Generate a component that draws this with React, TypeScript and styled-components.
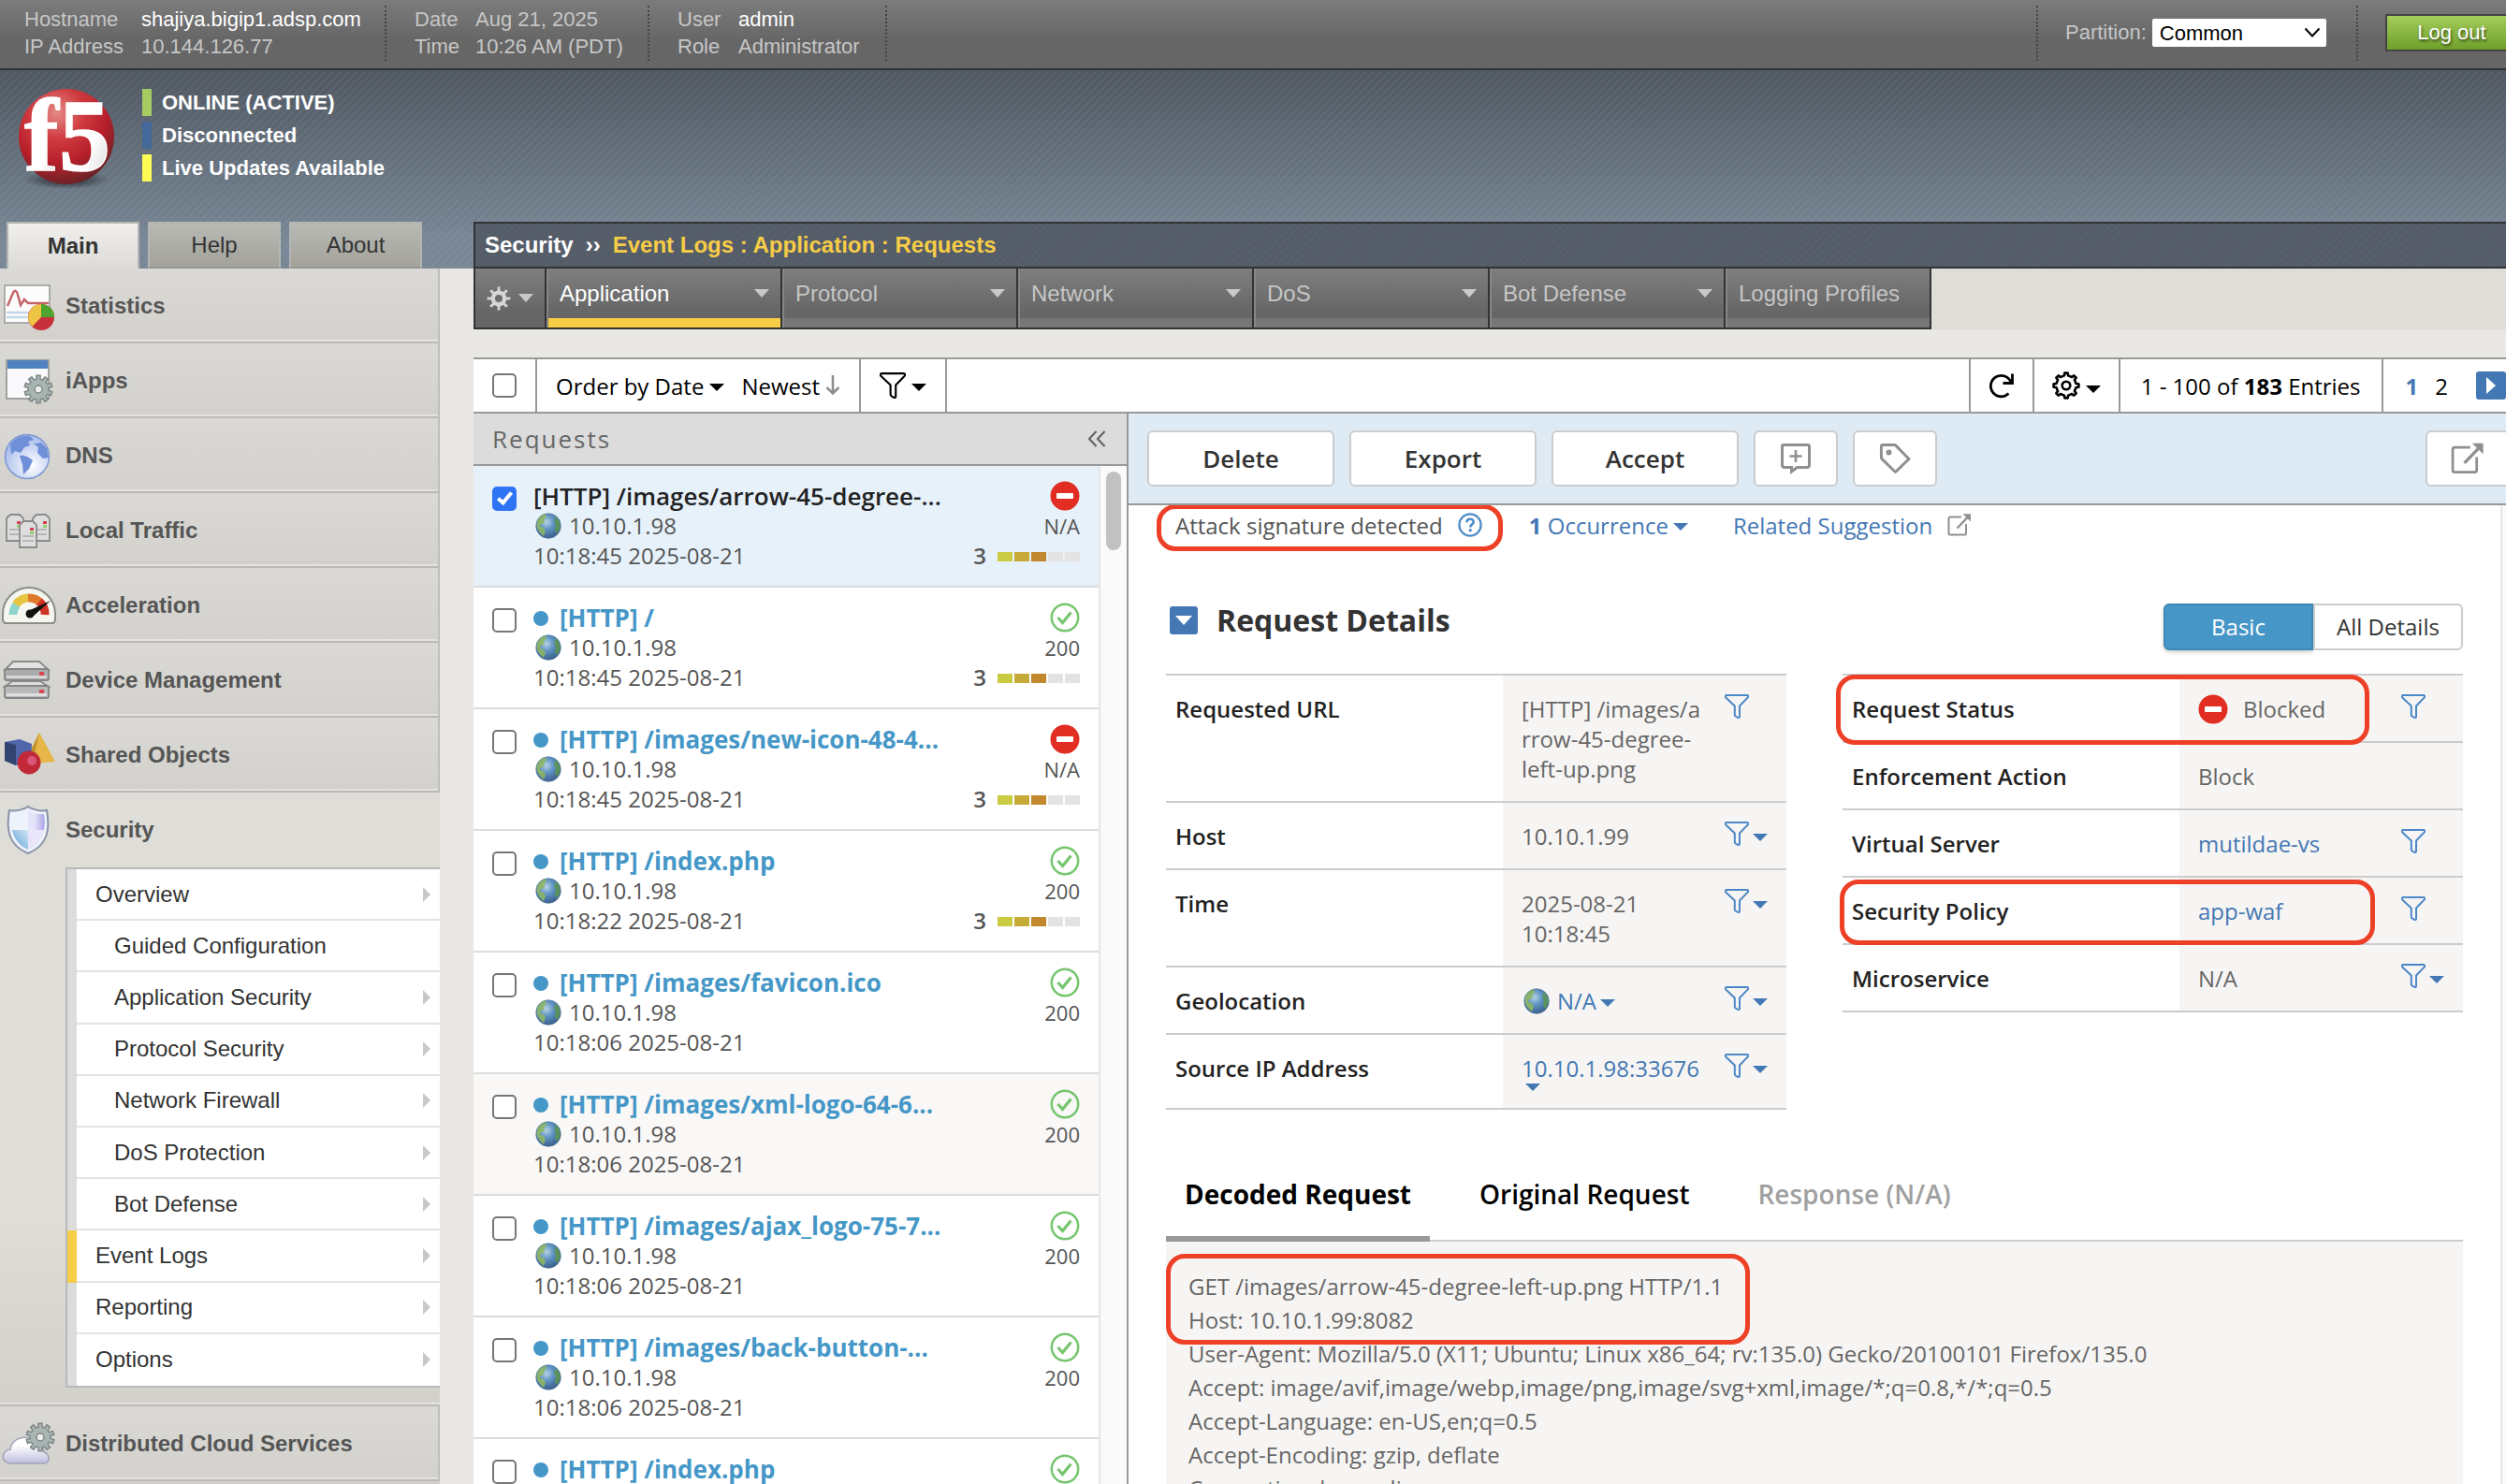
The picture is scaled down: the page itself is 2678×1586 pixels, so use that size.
import React from "react";
import styled, { createGlobalStyle, css } from "styled-components";

const SANS = '"Liberation Sans", Arial, sans-serif';
const OPEN = '"Open Sans", "Noto Sans", sans-serif';
const RED = "#ee4026";
const LINK = "#4478b4";

const Global = createGlobalStyle`
  *, *::before, *::after { box-sizing: border-box; }
  html, body { margin: 0; padding: 0; }
  body { background: #e9e8e4; font-family: ${SANS}; font-size: 24px; color: #333; overflow: hidden; }
  button, select, input { font-family: inherit; font-size: inherit; margin: 0; }
  button { cursor: pointer; }
  a { text-decoration: none; color: inherit; }
  svg { display: block; flex: none; }
  ul { list-style: none; margin: 0; padding: 0; }
  h1, h2, pre { margin: 0; font-weight: inherit; font-size: inherit; }
`;

/* ---------- icons ---------- */

function gearPath(cx: number, cy: number, outer: number, inner: number, teeth: number, top = 0.22, base = 0.3) {
  const step = (Math.PI * 2) / teeth;
  const pts: string[] = [];
  for (let i = 0; i < teeth; i++) {
    const a = i * step - Math.PI / 2;
    const corners: [number, number][] = [
      [inner, a - step * base],
      [outer, a - step * top],
      [outer, a + step * top],
      [inner, a + step * base],
    ];
    corners.forEach(([r, t]) => pts.push(`${(cx + r * Math.cos(t)).toFixed(2)} ${(cy + r * Math.sin(t)).toFixed(2)}`));
  }
  return `M${pts.join("L")}Z`;
}

const Funnel = ({ color = "#4d87c7", size = 26 }: { color?: string; size?: number }) => (
  <svg width={size} height={size} viewBox="0 0 26 26" fill="none" stroke={color} strokeWidth="2" strokeLinejoin="round">
    <path d="M2 1h22c1.2 0 1.4 1.6.8 2.4L16 12.500v11.200c0 1.300-.8 1.700-1.800 1.200l-2.400-1.400c-.8-.4-1-.8-1-1.600V12.500L1.200 3.400C.6 2.600.8 1 2 1z" />
  </svg>
);

const CaretShape = styled.svg.attrs({ viewBox: "0 0 16 8", width: 16, height: 8 })<{ $drop: number }>`
  margin-top: ${(p) => p.$drop}px;
`;
const Caret = ({ color = LINK, drop = 4 }: { color?: string; drop?: number }) => (
  <CaretShape $drop={drop}><path d="M0 0h16L8 8z" fill={color} /></CaretShape>
);

const MenuCaret = () => (
  <svg width="16" height="10" viewBox="0 0 16 10"><path d="M0 0h16L8 9z" fill="#c9c9c9" /></svg>
);

const Blocked = () => (
  <svg width="32" height="32" viewBox="0 0 32 32">
    <circle cx="16" cy="16" r="15.500" fill="#e12d22" />
    <rect x="7" y="13" width="18" height="6" rx="1" fill="#fff" />
  </svg>
);

const Passed = () => (
  <svg width="32" height="32" viewBox="0 0 32 32" fill="none" stroke="#76c56e">
    <circle cx="16" cy="16" r="14.200" strokeWidth="2.500" />
    <path d="M8.500 16l5 5.500 9-11" strokeWidth="3.200" />
  </svg>
);

const Globe = () => (
  <svg width="28" height="28" viewBox="0 0 28 28">
    <defs>
      <radialGradient id="sea" cx="0.42" cy="0.35" r="0.65">
        <stop offset="0" stopColor="#b9d3e6" />
        <stop offset="0.45" stopColor="#5f93c4" />
        <stop offset="1" stopColor="#3a5f8c" />
      </radialGradient>
    </defs>
    <circle cx="14" cy="14" r="13.500" fill="url(#sea)" />
    <path d="M2 9C3 5 7 2 11 1l1 3-3 4 1 3-4 1-1 3 4 1 2 4-2 5C4 21 0 15 2 9z" fill="#8fb85e" opacity="0.85" />
    <path d="M22 4c3 3 5 6 5 10-1 4-2 6-4 8l-2-4 1-5-2-3z" fill="#5d9650" opacity="0.85" />
    <circle cx="14" cy="14" r="13" fill="none" stroke="#5a7da0" strokeOpacity="0.5" />
  </svg>
);

const External = ({ size }: { size: number }) => (
  <svg width={size} height={size} viewBox="0 0 26 26" fill="none" stroke="#8f8f8f" strokeWidth="2">
    <path d="M15 4.500H3a1.500 1.500 0 0 0-1.500 1.500V22A1.500 1.500 0 0 0 3 23.500H18.500a1.500 1.500 0 0 0 1.500-1.500V12" />
    <path d="M10.500 16.500L23 3.500" strokeWidth="2.400" />
    <path d="M16.500 1.200H25V9.500z" fill="#8f8f8f" stroke="none" />
  </svg>
);

const CommentIcon = () => (
  <svg width="34" height="34" viewBox="0 0 34 34" fill="none" stroke="#8f8f8f" strokeWidth="3">
    <path d="M4 2.500h26a1.500 1.500 0 0 1 1.500 1.500v20a2.500 2.500 0 0 1-2.500 2.500H18.500L12.500 31v-4.500H5A2.500 2.500 0 0 1 2.500 24V4A1.500 1.500 0 0 1 4 2.500z" />
    <path d="M17 8v13M10.500 14.500h13" strokeWidth="2.600" />
  </svg>
);

const TagIcon = () => (
  <svg width="34" height="34" viewBox="0 0 34 34" fill="none" stroke="#8f8f8f" strokeWidth="3" strokeLinejoin="round">
    <path d="M4 2.500h12.500a2 2 0 0 1 1.400.6L32 17.500 17.500 31.500 3 17.400a2 2 0 0 1-.6-1.400V4A1.500 1.500 0 0 1 4 2.500z" />
    <circle cx="10.500" cy="10.500" r="3" fill="#8f8f8f" stroke="none" />
  </svg>
);

const Help = () => (
  <svg width="26" height="26" viewBox="0 0 26 26" fill="none" stroke="#4d8bc9" strokeWidth="2.200">
    <circle cx="13" cy="13" r="11.600" />
    <path d="M9.500 10.200c0-4.600 7.200-4.400 7.200-.4 0 2.600-3.500 2.600-3.500 5.600" strokeWidth="2.600" />
    <circle cx="13.200" cy="18.700" r="1.700" fill="#4d8bc9" stroke="none" />
  </svg>
);

const Refresh = () => (
  <svg width="28" height="28" viewBox="0 0 28 28" fill="none" stroke="#000" strokeWidth="2.800">
    <path d="M21.500 22.500A11.200 11.200 0 1 1 24 10.500" />
    <path d="M25.500 1.500V11.500H15.500" />
  </svg>
);

const Gear = () => (
  <svg width="30" height="30" viewBox="0 0 30 30" fill="none" stroke="#000" strokeWidth="2.600" strokeLinejoin="round">
    <path d={gearPath(15, 15, 13.500, 10.800, 8, 0.16, 0.24)} />
    <circle cx="15" cy="15" r="4.300" />
  </svg>
);

const MenuGear = () => (
  <svg width="26" height="26" viewBox="0 0 26 26">
    <path d={gearPath(13, 13, 12.500, 8.500, 8, 0.15, 0.2)} fill="#d6d6d6" />
    <circle cx="13" cy="13" r="4" fill="#6c6c6c" />
  </svg>
);

const SortDown = () => (
  <svg width="16" height="22" viewBox="0 0 16 22" fill="none" stroke="#8f8f8f" strokeWidth="2.600">
    <path d="M8 0v20M1.500 13L8 19.500 14.500 13" />
  </svg>
);

const Collapse = () => (
  <svg width="20" height="18" viewBox="0 0 20 18" fill="none" stroke="#666" strokeWidth="2.200">
    <path d="M9.500 1L2 9l7.500 8M18.500 1L11 9l7.500 8" />
  </svg>
);

const LogoSvg = styled.svg`overflow: visible;`;
const Logo = () => (
  <LogoSvg width="104" height="108" viewBox="0 0 104 108" role="img" aria-label="F5">
    <defs>
      <radialGradient id="ball" cx="0.4" cy="0.25" r="0.8">
        <stop offset="0" stopColor="#e58a86" />
        <stop offset="0.35" stopColor="#cf3a3f" />
        <stop offset="0.65" stopColor="#b71f2a" />
        <stop offset="1" stopColor="#5f2426" />
      </radialGradient>
      <radialGradient id="ballShadow">
        <stop offset="0" stopColor="#1c2128" stopOpacity="0.95" />
        <stop offset="1" stopColor="#1c2128" stopOpacity="0" />
      </radialGradient>
      <linearGradient id="letters" x1="0" y1="0" x2="1" y2="1">
        <stop offset="0.6" stopColor="#fff" />
        <stop offset="1" stopColor="#cfcfcf" />
      </linearGradient>
    </defs>
    <ellipse cx="52" cy="97" rx="46" ry="10" fill="url(#ballShadow)" />
    <circle cx="52" cy="51" r="51" fill="url(#ball)" />
    <g fontFamily="Liberation Serif, serif" fontWeight="700" fill="url(#letters)" stroke="#fff" strokeWidth="1.500">
      <text x="7" y="87" fontSize="110">f</text>
      <text x="44" y="87" fontSize="110">5</text>
    </g>
  </LogoSvg>
);

const NavSvg = ({ children }: { children: React.ReactNode }) => (
  <svg width="62" height="56" viewBox="0 0 62 56">{children}</svg>
);

const StatisticsIcon = () => (
  <NavSvg>
    <rect x="5" y="6" width="48" height="40" fill="#fcfcfc" stroke="#999" strokeWidth="1.500" />
    <path d="M7 35h44M7 40h30" stroke="#c5d6e8" strokeWidth="2.500" />
    <path d="M8 28l6-14c2-4 4-2 5 2l3 11 4-6 4 4h22" fill="none" stroke="#c3646a" strokeWidth="2.500" />
    <circle cx="44" cy="40" r="14" fill="#c8303a" />
    <path d="M44 40V26a14 14 0 0 1 14 14z" fill="#4ea42f" />
    <path d="M44 40V26a14 14 0 0 0-9.500 24z" fill="#edc443" />
  </NavSvg>
);

const IAppsIcon = () => (
  <NavSvg>
    <rect x="7" y="6" width="45" height="41" fill="#fafafc" stroke="#8a8a8a" strokeWidth="1.500" />
    <rect x="8" y="6" width="43" height="9" fill="#4f82c0" />
    <path d={gearPath(41, 37, 15, 11, 10)} fill="#a9b5b3" stroke="#7d8886" strokeWidth="1.500" />
    <circle cx="41" cy="37" r="4" fill="#eee" stroke="#7d8886" strokeWidth="1.500" />
  </NavSvg>
);

const DnsIcon = () => (
  <NavSvg>
    <defs>
      <radialGradient id="dns" cx="0.6" cy="0.7" r="0.75">
        <stop offset="0" stopColor="#fff" />
        <stop offset="1" stopColor="#9db3e8" />
      </radialGradient>
    </defs>
    <circle cx="29" cy="29" r="23.500" fill="url(#dns)" stroke="#7f98d0" strokeWidth="1.500" />
    <path d="M11 16c5-7 13-10 21-9l4 4-6 2 2 4-6 2-4 6-6-2-4 4z" fill="#6f8fd8" />
    <path d="M21 28c6-1 10 2 14 5l-4 9-6 6-1-10z" fill="#6f8fd8" />
    <path d="M44 14l6 6 2 10-6 1-6-6 1-6-5-4z" fill="#6f8fd8" />
  </NavSvg>
);

const Server = ({ x, y }: { x: number; y: number }) => (
  <g>
    <path d={`M${x} ${y + 5}l4-4h10l4 4v24h-18z`} fill="#dedede" stroke="#8b8b8b" strokeWidth="1.800" />
    <path d={`M${x + 3} ${y + 17}h12M${x + 3} ${y + 22}h12`} stroke="#aaa" strokeWidth="1.500" />
    <rect x={x + 11} y={y + 8} width="4" height="3" fill="#d6404a" />
    <rect x={x + 11} y={y + 12} width="4" height="3" fill="#8fd070" />
  </g>
);

const TrafficIcon = () => (
  <NavSvg><Server x={7} y={10} /><Server x={35} y={10} /><Server x={21} y={17} /></NavSvg>
);

const AccelIcon = () => (
  <NavSvg>
    <path d="M3 44V37a27 27 0 0 1 56 0v7l-2 3H5z" fill="#f6f6f1" stroke="#8d8d88" strokeWidth="2" />
    <g fill="none" strokeWidth="9">
      <path d="M14 38a17 17 0 0 1 4-11" stroke="#8ed6cc" />
      <path d="M17 27a17 17 0 0 1 13-7" stroke="#e6c640" />
      <path d="M30 20a17 17 0 0 1 13 5" stroke="#df7a2c" />
      <path d="M42 24a17 17 0 0 1 6 14" stroke="#d13327" />
    </g>
    <path d="M30 34l24-11-19 17z" fill="#111" />
    <circle cx="32" cy="37" r="4.500" fill="#111" />
  </NavSvg>
);

const DeviceIcon = () => (
  <NavSvg>
    <path d="M5 35l8-6h30l9 6z" fill="#dcdcdc" stroke="#8b8b8b" strokeWidth="1.800" />
    <rect x="5" y="34" width="47" height="13" rx="2" fill="#b9b9b9" stroke="#858585" strokeWidth="1.800" />
    <rect x="7" y="42" width="43" height="3" fill="#dedede" />
    <rect x="42" y="38" width="5" height="4" fill="#d8474d" />
    <path d="M5 17l9-9h28l10 9z" fill="#e2e2e2" stroke="#8b8b8b" strokeWidth="1.800" />
    <rect x="5" y="16" width="47" height="12" rx="2" fill="#acacac" stroke="#858585" strokeWidth="1.800" />
    <rect x="7" y="23" width="43" height="3" fill="#d6d6d6" />
    <rect x="42" y="19" width="5" height="4" fill="#d8474d" />
  </NavSvg>
);

const SharedIcon = () => (
  <NavSvg>
    <path d="M42 4l17 31-22 2-8-6z" fill="#e7b648" />
    <path d="M42 4L29 31l6 4z" fill="#c28f2e" />
    <path d="M5 14l16-3 13 5-1 20-16 3L5 34z" fill="#4f66ab" />
    <path d="M5 14l12 3v22L5 34z" fill="#33436f" />
    <circle cx="31" cy="36" r="12.500" fill="#c22938" />
    <circle cx="34" cy="34" r="5" fill="#e0628a" opacity="0.8" />
  </NavSvg>
);

const ShieldIcon = () => (
  <NavSvg>
    <defs>
      <linearGradient id="shieldBlue" x1="1" y1="0" x2="0" y2="1">
        <stop offset="0" stopColor="#d5e6f3" />
        <stop offset="1" stopColor="#5a9fd8" />
      </linearGradient>
      <linearGradient id="shieldViolet" x1="0" y1="0" x2="1" y2="0">
        <stop offset="0.4" stopColor="#e6e4fa" />
        <stop offset="1" stopColor="#aaa4e6" />
      </linearGradient>
    </defs>
    <path d="M30 3c5 4 14 5 20 4 4 22 0 38-20 46C10 45 6 29 10 7c6 1 15 0 20-4z" fill="#eef3fb" stroke="#8a94a8" strokeWidth="2" />
    <path d="M30 7c5 4 12 4 17 4 1 7 1 12 0 17H30z" fill="url(#shieldViolet)" />
    <path d="M13 28h17v21c-9-4-15-11-17-21z" fill="url(#shieldBlue)" />
    <path d="M30 28h17c-2 11-8 17-17 21z" fill="#e9e6fb" />
  </NavSvg>
);

const CloudIcon = () => (
  <NavSvg>
    <defs>
      <linearGradient id="cloud" x1="0" y1="0" x2="0" y2="1">
        <stop offset="0.3" stopColor="#fff" />
        <stop offset="1" stopColor="#bdbdde" />
      </linearGradient>
    </defs>
    <path d="M12 49c-12 0-11-14-1-15 1-12 18-18 26-6 9-1 10 7 10 9 8 3 6 12-1 12z" fill="url(#cloud)" stroke="#a3a3b8" strokeWidth="1.500" />
    <path d={gearPath(43, 21, 15, 11, 10)} fill="#a9b5b3" stroke="#7d8886" strokeWidth="1.500" />
    <circle cx="43" cy="21" r="4" fill="#eee" stroke="#7d8886" strokeWidth="1.500" />
  </NavSvg>
);

/* ---------- shell ---------- */

const Viewport = styled.div`
  height: 100vh;
  overflow: hidden;
`;
const Page = styled.div`
  width: calc(100% + 24px);
  height: 100%;
  display: flex;
  flex-direction: column;
`;

const TopBar = styled.header`
  flex: none;
  height: 75px;
  display: flex;
  background: linear-gradient(#7c7c7c, #666 60%);
  border-bottom: 2px solid #333;
  padding: 6px 11px 0 26px;
  font-size: 22px;
  line-height: 29px;
  color: #c6c6c6;
`;
const InfoGroup = styled.dl<{ $label: number; $width: number }>`
  margin: 0 30px 0 0;
  height: 59px;
  width: ${(p) => p.$width}px;
  display: grid;
  align-content: start;
  grid-template-columns: ${(p) => p.$label}px 1fr;
  border-right: 2px dotted #444;
  white-space: nowrap;
  dt, dd { margin: 0; }
`;
const Bright = styled.span`color: #fff;`;
const TopSpacer = styled.div`flex: 1;`;
const PartitionBox = styled.label`
  height: 59px;
  width: 344px;
  display: flex;
  align-items: flex-start;
  gap: 6px;
  padding: 14px 0 0 29px;
  border: dotted #444;
  border-width: 0 2px;
`;
const PartitionSelect = styled.select`
  appearance: none;
  width: 186px;
  height: 30px;
  border: 0;
  border-radius: 2px;
  padding: 0 8px;
  font-size: 22px;
  color: #000;
  background: #fff url("data:image/svg+xml,%3Csvg xmlns='http://www.w3.org/2000/svg' width='18' height='12'%3E%3Cpath d='M1.500 1.500l7.500 8 7.500-8' fill='none' stroke='%23000' stroke-width='2'/%3E%3C/svg%3E") no-repeat right 6px center;
`;
const LogOut = styled.button`
  width: 142px;
  height: 40px;
  margin: 9px 0 0 29px;
  border: 2px solid #444;
  background: linear-gradient(#a5cd5c, #6f9f2b);
  color: #fff;
  font-size: 22px;
  text-shadow: 1px 2px 3px rgba(0, 0, 0, 0.6);
`;

const stripes = (alpha: number) =>
  `repeating-linear-gradient(135deg, rgba(255,255,255,${alpha}) 0 2px, rgba(255,255,255,0) 3px 5px, rgba(255,255,255,${alpha}) 6px)`;

const Masthead = styled.div`
  flex: none;
  height: 212px;
  display: flex;
  flex-direction: column;
  justify-content: space-between;
  background: ${stripes(0.035)}, linear-gradient(#4f5761, #64707c 45%, #788695 85%);
`;
const Brand = styled.div`
  display: flex;
  gap: 29px;
  padding: 20px 0 0 19px;
`;
const StatusList = styled.ul`
  display: flex;
  flex-direction: column;
  gap: 6px;
`;
const Status = styled.li<{ $color: string }>`
  height: 29px;
  line-height: 29px;
  border-left: 10px solid ${(p) => p.$color};
  padding-left: 11px;
  font-size: 22px;
  font-weight: 700;
  color: #fff;
`;
const MastFoot = styled.div`
  display: flex;
  height: 50px;
`;
const SideTabs = styled.nav`
  width: 506px;
  flex: none;
  display: flex;
  gap: 9px;
  padding-left: 7px;
`;
const SideTab = styled.button<{ $active?: boolean }>`
  width: 142px;
  padding: 0;
  border: 2px solid #b5b5b5;
  border-bottom: ${(p) => (p.$active ? "0" : "2px solid #979791")};
  background: ${(p) => (p.$active ? "linear-gradient(#f0efed, #dcdbd6)" : "linear-gradient(#b9b9b4, #a2a29b)")};
  font-size: 24px;
  font-weight: ${(p) => (p.$active ? 700 : 400)};
  color: #333;
`;
const Crumbs = styled.div`
  flex: 1;
  display: flex;
  align-items: center;
  gap: 13px;
  padding-left: 10px;
  border: 2px solid #333;
  border-right: 0;
  background: ${stripes(0.02)}, #545c68;
  color: #fff;
  font-weight: 700;
`;
const CrumbPath = styled.h1`
  color: #f7cd46;
  font-weight: 700;
`;

const Body = styled.div`
  flex: 1;
  min-height: 0;
  display: grid;
  grid-template-columns: 470px minmax(0, 1fr);
  column-gap: 36px;
`;

/* ---------- sidebar ---------- */

const Sidebar = styled.nav`
  overflow: hidden;
  background: #d1d0cb;
`;
const NavItem = styled.a<{ $open?: boolean }>`
  height: 80px;
  display: flex;
  align-items: center;
  gap: 8px;
  padding-top: ${(p) => (p.$open ? 0 : 2)}px;
  font-weight: 700;
  color: #555;
  ${(p) =>
    !p.$open &&
    css`
      background: linear-gradient(#dad9d5, #d2d1cc);
      border-right: 2px solid #bdbdbb;
      border-bottom: 2px solid #bab9b6;
      box-shadow: inset 0 -2px #e4e3e0;
    `}
`;
const NavSection = styled.div`
  padding-bottom: 18px;
  background: linear-gradient(#deddd8 70%, #d1d0cb);
  border-bottom: 2px solid #bab9b6;
  box-shadow: inset 0 -2px #e4e3e0;
`;
const SubMenu = styled.ul`
  margin-left: 70px;
  height: 556px;
  display: grid;
  grid-auto-rows: 1fr;
  border: 2px solid #b9b9b9;
  border-right: 0;
  background: #fff;
`;
const SubItem = styled.li<{ $active?: boolean }>`
  display: flex;
  border-left: 10px solid ${(p) => (p.$active ? "#f7cd46" : "#dcdcdc")};
  &:not(:last-child) > a { border-bottom: 2px solid #e3e3e3; }
`;
const SubLink = styled.a<{ $nested?: boolean }>`
  flex: 1;
  display: flex;
  align-items: center;
  justify-content: space-between;
  padding: 0 10px 0 ${(p) => (p.$nested ? 40 : 20)}px;
`;
const SubArrow = () => (
  <svg width="8" height="16" viewBox="0 0 8 16"><path d="M0 0l8 8-8 8z" fill="#c8c8c8" /></svg>
);

/* ---------- main ---------- */

const Main = styled.main`
  display: flex;
  flex-direction: column;
  min-height: 0;
`;
const MenuStrip = styled.div`
  flex: none;
  height: 65px;
  background: #deddd8;
`;
const Menu = styled.ul`
  display: inline-flex;
  height: 65px;
  background: linear-gradient(#7e7e7e, #666 75%);
  border: 2px solid #333;
  border-top: 0;
`;
const MenuItem = styled.li<{ $kind?: "tool" | "last" }>`
  width: ${(p) => (p.$kind === "tool" ? 76 : p.$kind === "last" ? 218 : 252)}px;
  display: flex;
  border-right: ${(p) => (p.$kind === "last" ? "0" : "2px solid #333")};
  border-left: ${(p) => (p.$kind === "tool" ? "0" : "2px solid #868686")};
`;
const MenuLink = styled.a<{ $active?: boolean; $tool?: boolean }>`
  flex: 1;
  display: flex;
  align-items: center;
  justify-content: space-between;
  padding: 0 12px;
  color: ${(p) => (p.$active ? "#fff" : "#c6c6c6")};
  border-bottom: ${(p) => (p.$tool ? "0" : `10px solid ${p.$active ? "#f7cd46" : "#777"}`)};
`;

const Workspace = styled.section`
  flex: 1;
  min-height: 0;
  margin-top: 30px;
  display: flex;
  flex-direction: column;
  background: #fff;
  font-family: ${OPEN};
`;
const Toolbar = styled.div`
  flex: none;
  height: 60px;
  display: flex;
  border: solid #999;
  border-width: 2px 0;
  color: #000;
`;
const ToolCell = styled.div<{ $side?: "left" | "right"; $pad: number; $gap?: number }>`
  display: flex;
  align-items: center;
  gap: ${(p) => p.$gap ?? 6}px;
  padding: 0 ${(p) => p.$pad}px;
  white-space: nowrap;
  ${(p) => (p.$side === "right" ? "border-left" : "border-right")}: 2px solid #999;
`;
const PlainButton = styled.button`
  display: inline-flex;
  align-items: center;
  gap: 6px;
  padding: 0;
  border: 0;
  background: none;
  color: inherit;
`;
const Spacer = styled.div`flex: 1;`;
const PageLink = styled.a<{ $current?: boolean }>`
  font-weight: ${(p) => (p.$current ? 700 : 400)};
  color: ${(p) => (p.$current ? LINK : "#000")};
`;
const NextButton = styled.button`
  width: 32px;
  height: 30px;
  margin-left: 12px;
  padding: 0;
  display: flex;
  align-items: center;
  justify-content: center;
  border: 0;
  border-radius: 3px;
  background: ${LINK};
`;

const Check = styled.input.attrs({ type: "checkbox" })`
  appearance: none;
  flex: none;
  width: 26px;
  height: 26px;
  border: 2px solid #767676;
  border-radius: 5px;
  background: #fff;
  display: grid;
  place-items: center;
  &:checked { background: #2f74f5; border-color: #2f74f5; }
  &:checked::after {
    content: "";
    width: 9px;
    height: 16px;
    margin-bottom: 4px;
    border: solid #fff;
    border-width: 0 4px 4px 0;
    transform: rotate(40deg);
  }
`;

const Panes = styled.div`
  flex: 1;
  min-height: 0;
  display: grid;
  grid-template-columns: 700px minmax(0, 1fr);
`;
const ListPane = styled.section`
  display: flex;
  flex-direction: column;
  min-height: 0;
  border-right: 2px solid #999;
`;
const ListHead = styled.div`
  flex: none;
  height: 56px;
  display: flex;
  align-items: center;
  justify-content: space-between;
  padding: 0 22px 0 20px;
  background: #dcdcdc;
  border-bottom: 2px solid #999;
  color: #666;
`;
const ListTitle = styled.h2`
  font-size: 26px;
  letter-spacing: 2px;
`;
const ListBody = styled.div`
  flex: 1;
  min-height: 0;
  display: grid;
  grid-template-columns: minmax(0, 1fr) 30px;
`;
const Rows = styled.ul`overflow: hidden;`;
const ScrollTrack = styled.div`
  display: flex;
  justify-content: center;
  padding-top: 6px;
  background: #fafafa;
  border-left: 2px solid #e6e6e6;
`;
const ScrollThumb = styled.div`
  width: 16px;
  height: 84px;
  border-radius: 8px;
  background: #c1c1c1;
`;
const Row = styled.li<{ $tone?: "selected" | "hover" }>`
  height: 130px;
  display: grid;
  grid-template-columns: 26px minmax(0, 1fr) auto;
  column-gap: 18px;
  padding: 16px 20px 0;
  border-bottom: 2px solid #dcdcdc;
  line-height: 32px;
  color: #555;
  background: ${(p) => (p.$tone === "selected" ? "#e6f1fa" : p.$tone === "hover" ? "#f9f8f7" : "#fff")};
  ${Check} { margin-top: 6px; }
`;
const RowTitle = styled.a<{ $read?: boolean }>`
  display: flex;
  align-items: center;
  gap: 12px;
  font-size: 26px;
  font-weight: ${(p) => (p.$read ? 600 : 700)};
  color: ${(p) => (p.$read ? "#222" : "#4597c7")};
  white-space: nowrap;
`;
const Dot = styled.span`
  width: 16px;
  height: 16px;
  margin-top: 2px;
  border-radius: 50%;
  background: #4597c7;
`;
const IconLine = styled.div`
  display: flex;
  align-items: center;
  gap: 8px;
  padding-left: 2px;
`;
const RowSide = styled.div`
  display: flex;
  flex-direction: column;
  align-items: flex-end;
  font-size: 22px;
`;
const Rating = styled.div`
  display: flex;
  align-items: center;
  gap: 2px;
  font-size: 24px;
  font-weight: 600;
`;
const RatingValue = styled.span`margin-right: 10px;`;
const RatingBar = styled.span<{ $color: string }>`
  width: 16px;
  height: 10px;
  margin-top: 2px;
  background: ${(p) => p.$color};
`;

/* ---------- detail ---------- */

const DetailPane = styled.section`
  display: flex;
  flex-direction: column;
  min-height: 0;
`;
const ActionBar = styled.div`
  flex: none;
  height: 98px;
  display: flex;
  align-items: center;
  gap: 16px;
  padding: 0 20px;
  background: #deebf5;
  border-bottom: 2px solid #999;
`;
const ActionButton = styled.button<{ $icon?: boolean }>`
  width: ${(p) => (p.$icon ? 90 : 200)}px;
  height: 60px;
  padding: 0;
  display: flex;
  align-items: center;
  justify-content: center;
  border: 2px solid #ccc;
  border-radius: 6px;
  background: #fff;
  font-size: 26px;
  font-weight: 600;
  color: #333;
`;
const DetailBody = styled.div`
  flex: 1;
  min-height: 0;
  display: grid;
  grid-template-columns: minmax(0, 1fr) 30px;
`;
const Detail = styled.div`
  overflow: hidden;
  padding: 0 40px;
  display: flex;
  flex-direction: column;
  > * { flex-shrink: 0; }
`;
const Violation = styled.div`
  height: 42px;
  display: flex;
  align-items: center;
  color: #555;
`;
const Marked = styled.div`
  position: relative;
  display: flex;
  align-items: center;
  gap: 16px;
  padding-left: 10px;
`;
const Mark = styled.span<{ $top: number; $left: number; $right?: number; $width?: number; $height: number }>`
  position: absolute;
  top: ${(p) => p.$top}px;
  left: ${(p) => p.$left}px;
  ${(p) => (p.$width !== undefined ? `width: ${p.$width}px;` : `right: ${p.$right}px;`)}
  height: ${(p) => p.$height}px;
  border: 5px solid ${RED};
  border-radius: 20px;
  pointer-events: none;
`;
const TextLink = styled.a<{ $indent?: number; $gap?: number }>`
  display: inline-flex;
  align-items: center;
  gap: ${(p) => p.$gap ?? 5}px;
  margin-left: ${(p) => p.$indent ?? 0}px;
  color: ${LINK};
  white-space: pre;
`;
const SectionHead = styled.div`
  margin: 63px 0 25px;
  height: 50px;
  display: flex;
  justify-content: space-between;
`;
const SectionTitle = styled.div`
  height: 36px;
  display: flex;
  align-items: center;
  gap: 20px;
  padding-left: 4px;
  color: #333;
`;
const Toggle = styled.button`
  width: 30px;
  height: 30px;
  padding: 0;
  display: flex;
  align-items: center;
  justify-content: center;
  border: 0;
  border-radius: 3px;
  background: ${LINK};
`;
const Heading = styled.h2`
  font-size: 32px;
  line-height: 36px;
  font-weight: 700;
`;
const Segments = styled.div`display: flex;`;
const Segment = styled.button<{ $active?: boolean }>`
  width: 160px;
  height: 50px;
  padding: 0 0 2px;
  font-size: 24px;
  border: 2px solid ${(p) => (p.$active ? "#3f87b3" : "#ccc")};
  border-radius: ${(p) => (p.$active ? "6px 0 0 6px" : "0 6px 6px 0")};
  background: ${(p) => (p.$active ? "#4697c7" : "#fff")};
  color: ${(p) => (p.$active ? "#fff" : "#333")};
  box-shadow: ${(p) => (p.$active ? "0 2px 4px rgba(0,0,0,.2)" : "none")};
`;
const Tables = styled.div`
  display: grid;
  grid-template-columns: 1fr 1fr;
  column-gap: 60px;
  align-items: start;
`;
const TableWrap = styled.div`position: relative;`;
const Table = styled.table`
  width: 100%;
  border-collapse: separate;
  border-spacing: 0;
  table-layout: fixed;
  border-top: 2px solid #ccc;
  line-height: 32px;
`;
const LabelCell = styled.th`
  width: 360px;
  padding: 20px 10px 18px;
  text-align: left;
  vertical-align: top;
  font-weight: 600;
  color: #222;
  border-bottom: 2px solid #ccc;
`;
const ValueCell = styled.td`
  padding: 20px 0 18px 20px;
  vertical-align: top;
  white-space: nowrap;
  color: #666;
  background: #f6f5f3;
  border-bottom: 2px solid #ccc;
`;
const FilterCell = styled.td`
  width: 66px;
  padding: 20px 0 0;
  vertical-align: top;
  background: #f6f5f3;
  border-bottom: 2px solid #ccc;
`;
const FilterButton = styled(PlainButton)`
  display: flex;
  gap: 4px;
  height: 26px;
`;
const CaretLine = styled.span`
  display: block;
  height: 8px;
  padding-left: 4px;
`;
const TabBar = styled.div`
  margin-top: 45px;
  flex: none;
  height: 96px;
  display: flex;
  gap: 33px;
  box-shadow: inset 0 -2px #ccc;
`;
const Tab = styled.button<{ $state?: "active" | "off" }>`
  padding: 0 20px;
  background: none;
  border: 0;
  border-bottom: 6px solid ${(p) => (p.$state === "active" ? "#999" : "transparent")};
  font-size: 28px;
  font-weight: ${(p) => (p.$state === "active" ? 700 : 600)};
  color: ${(p) => (p.$state === "off" ? "#a0a0a0" : "#000")};
`;
const CodeWrap = styled.div`
  position: relative;
  background: #f6f5f3;
`;
const Code = styled.pre`
  padding: 30px 24px;
  font-family: ${OPEN};
  line-height: 36px;
  color: #666;
`;

/* ---------- data ---------- */

const navItems: [string, () => React.ReactElement][] = [
  ["Statistics", StatisticsIcon],
  ["iApps", IAppsIcon],
  ["DNS", DnsIcon],
  ["Local Traffic", TrafficIcon],
  ["Acceleration", AccelIcon],
  ["Device Management", DeviceIcon],
  ["Shared Objects", SharedIcon],
];

const subItems: { text: string; nested?: boolean; leaf?: boolean; active?: boolean }[] = [
  { text: "Overview" },
  { text: "Guided Configuration", nested: true, leaf: true },
  { text: "Application Security", nested: true },
  { text: "Protocol Security", nested: true },
  { text: "Network Firewall", nested: true },
  { text: "DoS Protection", nested: true },
  { text: "Bot Defense", nested: true },
  { text: "Event Logs", active: true },
  { text: "Reporting" },
  { text: "Options" },
];

type RequestRow = { title: string; time: string; blocked?: boolean; rated?: boolean; tone?: "selected" | "hover" };
const requests: RequestRow[] = [
  { title: "/images/arrow-45-degree-...", time: "10:18:45", blocked: true, rated: true, tone: "selected" },
  { title: "/", time: "10:18:45", rated: true },
  { title: "/images/new-icon-48-4...", time: "10:18:45", blocked: true, rated: true },
  { title: "/index.php", time: "10:18:22", rated: true },
  { title: "/images/favicon.ico", time: "10:18:06" },
  { title: "/images/xml-logo-64-6...", time: "10:18:06", tone: "hover" },
  { title: "/images/ajax_logo-75-7...", time: "10:18:06" },
  { title: "/images/back-button-...", time: "10:18:06" },
  { title: "/index.php", time: "10:18:06" },
];
const ratingColors = ["#cacb40", "#c6aa38", "#c1882d", "#e3e3e3", "#e3e3e3"];

type Field = { label: string; value: React.ReactNode; filter?: "plain" | "menu" };
const leftFields: Field[] = [
  { label: "Requested URL", value: <>[HTTP] /images/a<br />rrow-45-degree-<br />left-up.png</>, filter: "plain" },
  { label: "Host", value: "10.10.1.99", filter: "menu" },
  { label: "Time", value: <>2025-08-21<br />10:18:45</>, filter: "menu" },
  { label: "Geolocation", value: <IconLine><Globe /><TextLink href="#" $gap={4}>N/A<Caret /></TextLink></IconLine>, filter: "menu" },
  { label: "Source IP Address", value: <><TextLink href="#">10.10.1.98:33676</TextLink><CaretLine><Caret drop={0} /></CaretLine></>, filter: "menu" },
];
const StatusValue = styled.div`
  display: flex;
  align-items: center;
  gap: 16px;
`;
const rightFields: Field[] = [
  { label: "Request Status", value: <StatusValue><Blocked />Blocked</StatusValue>, filter: "plain" },
  { label: "Enforcement Action", value: "Block" },
  { label: "Virtual Server", value: <TextLink href="#">mutildae-vs</TextLink>, filter: "plain" },
  { label: "Security Policy", value: <TextLink href="#">app-waf</TextLink>, filter: "plain" },
  { label: "Microservice", value: "N/A", filter: "menu" },
];

const decoded = `GET /images/arrow-45-degree-left-up.png HTTP/1.1
Host: 10.10.1.99:8082
User-Agent: Mozilla/5.0 (X11; Ubuntu; Linux x86_64; rv:135.0) Gecko/20100101 Firefox/135.0
Accept: image/avif,image/webp,image/png,image/svg+xml,image/*;q=0.8,*/*;q=0.5
Accept-Language: en-US,en;q=0.5
Accept-Encoding: gzip, deflate
Connection: keep-alive`;

const FieldTable = ({ fields }: { fields: Field[] }) => (
  <Table>
    <tbody>
      {fields.map((f) => (
        <tr key={f.label}>
          <LabelCell scope="row">{f.label}</LabelCell>
          <ValueCell>{f.value}</ValueCell>
          <FilterCell>
            {f.filter && (
              <FilterButton aria-label={`Filter by ${f.label}`}>
                <Funnel />
                {f.filter === "menu" && <Caret drop={8} />}
              </FilterButton>
            )}
          </FilterCell>
        </tr>
      ))}
    </tbody>
  </Table>
);

export default function App() {
  return (
    <Viewport>
      <Global />
      <Page>
        <TopBar>
          <InfoGroup $label={125} $width={387}>
            <dt>Hostname</dt><dd><Bright>shajiya.bigip1.adsp.com</Bright></dd>
            <dt>IP Address</dt><dd>10.144.126.77</dd>
          </InfoGroup>
          <InfoGroup $label={65} $width={251}>
            <dt>Date</dt><dd>Aug 21, 2025</dd>
            <dt>Time</dt><dd>10:26 AM (PDT)</dd>
          </InfoGroup>
          <InfoGroup $label={65} $width={224}>
            <dt>User</dt><dd><Bright>admin</Bright></dd>
            <dt>Role</dt><dd>Administrator</dd>
          </InfoGroup>
          <TopSpacer />
          <PartitionBox>
            Partition:
            <PartitionSelect defaultValue="Common"><option>Common</option></PartitionSelect>
          </PartitionBox>
          <LogOut>Log out</LogOut>
        </TopBar>

        <Masthead>
          <Brand>
            <Logo />
            <StatusList>
              <Status $color="#a5cc62">ONLINE (ACTIVE)</Status>
              <Status $color="#43689a">Disconnected</Status>
              <Status $color="#fffc54">Live Updates Available</Status>
            </StatusList>
          </Brand>
          <MastFoot>
            <SideTabs>
              <SideTab $active>Main</SideTab>
              <SideTab>Help</SideTab>
              <SideTab>About</SideTab>
            </SideTabs>
            <Crumbs>
              <span>Security</span>
              <span>››</span>
              <CrumbPath>Event Logs : Application : Requests</CrumbPath>
            </Crumbs>
          </MastFoot>
        </Masthead>

        <Body>
          <Sidebar>
            {navItems.map(([text, Icon]) => (
              <NavItem key={text} href="#"><Icon />{text}</NavItem>
            ))}
            <NavSection>
              <NavItem href="#" $open><ShieldIcon />Security</NavItem>
              <SubMenu>
                {subItems.map((s) => (
                  <SubItem key={s.text} $active={s.active}>
                    <SubLink href="#" $nested={s.nested}>{s.text}{!s.leaf && <SubArrow />}</SubLink>
                  </SubItem>
                ))}
              </SubMenu>
            </NavSection>
            <NavItem href="#"><CloudIcon />Distributed Cloud Services</NavItem>
          </Sidebar>

          <Main>
            <MenuStrip>
              <Menu>
                <MenuItem $kind="tool"><MenuLink href="#" $tool aria-label="Preferences"><MenuGear /><MenuCaret /></MenuLink></MenuItem>
                <MenuItem><MenuLink href="#" $active>Application<MenuCaret /></MenuLink></MenuItem>
                {["Protocol", "Network", "DoS", "Bot Defense"].map((m) => (
                  <MenuItem key={m}><MenuLink href="#">{m}<MenuCaret /></MenuLink></MenuItem>
                ))}
                <MenuItem $kind="last"><MenuLink href="#">Logging Profiles</MenuLink></MenuItem>
              </Menu>
            </MenuStrip>

            <Workspace>
              <Toolbar>
                <ToolCell $pad={20}><Check aria-label="Select all requests" /></ToolCell>
                <ToolCell $pad={20} $gap={18}>
                  <PlainButton>Order by Date<Caret color="#000" /></PlainButton>
                  <PlainButton>Newest<SortDown /></PlainButton>
                </ToolCell>
                <ToolCell $pad={20}>
                  <PlainButton aria-label="Filter"><Funnel color="#000" size={28} /><Caret color="#000" /></PlainButton>
                </ToolCell>
                <Spacer />
                <ToolCell $side="right" $pad={19}><PlainButton aria-label="Refresh"><Refresh /></PlainButton></ToolCell>
                <ToolCell $side="right" $pad={19}>
                  <PlainButton aria-label="Settings"><Gear /><Caret color="#000" drop={8} /></PlainButton>
                </ToolCell>
                <ToolCell $side="right" $pad={22}><span>1 - 100 of <b>183</b> Entries</span></ToolCell>
                <ToolCell $side="right" $pad={24} $gap={18}>
                  <PageLink href="#" $current>1</PageLink>
                  <PageLink href="#">2</PageLink>
                  <NextButton aria-label="Next page">
                    <svg width="10" height="18" viewBox="0 0 10 18"><path d="M0 0l10 9-10 9z" fill="#fff" /></svg>
                  </NextButton>
                </ToolCell>
              </Toolbar>

              <Panes>
                <ListPane>
                  <ListHead>
                    <ListTitle>Requests</ListTitle>
                    <PlainButton aria-label="Collapse list"><Collapse /></PlainButton>
                  </ListHead>
                  <ListBody>
                    <Rows>
                      {requests.map((r, i) => {
                        const selected = r.tone === "selected";
                        return (
                          <Row key={i} $tone={r.tone}>
                            <Check defaultChecked={selected} aria-label={`Select ${r.title}`} />
                            <div>
                              <RowTitle href="#" $read={selected}>
                                {!selected && <Dot />}[HTTP] {r.title}
                              </RowTitle>
                              <IconLine><Globe />10.10.1.98</IconLine>
                              <div>{r.time} 2025-08-21</div>
                            </div>
                            <RowSide>
                              {r.blocked ? <Blocked /> : <Passed />}
                              <span>{r.blocked ? "N/A" : "200"}</span>
                              {r.rated && (
                                <Rating>
                                  <RatingValue>3</RatingValue>
                                  {ratingColors.map((c, j) => <RatingBar key={j} $color={c} />)}
                                </Rating>
                              )}
                            </RowSide>
                          </Row>
                        );
                      })}
                    </Rows>
                    <ScrollTrack><ScrollThumb /></ScrollTrack>
                  </ListBody>
                </ListPane>

                <DetailPane>
                  <ActionBar>
                    <ActionButton>Delete</ActionButton>
                    <ActionButton>Export</ActionButton>
                    <ActionButton>Accept</ActionButton>
                    <ActionButton $icon aria-label="Add comment"><CommentIcon /></ActionButton>
                    <ActionButton $icon aria-label="Add tag"><TagIcon /></ActionButton>
                    <Spacer />
                    <ActionButton $icon aria-label="Open in new window"><External size={36} /></ActionButton>
                  </ActionBar>
                  <DetailBody>
                    <Detail>
                      <Violation>
                        <Marked>
                          Attack signature detected <Help />
                          <Mark $top={-6} $left={-10} $right={-22} $height={50} />
                        </Marked>
                        <TextLink href="#" $indent={50}><span><b>1</b> Occurrence</span><Caret /></TextLink>
                        <TextLink href="#" $indent={48} $gap={16}>Related Suggestion<External size={26} /></TextLink>
                      </Violation>

                      <SectionHead>
                        <SectionTitle>
                          <Toggle aria-label="Collapse Request Details">
                            <svg width="18" height="10" viewBox="0 0 18 10"><path d="M0 0h18L9 10z" fill="#fff" /></svg>
                          </Toggle>
                          <Heading>Request Details</Heading>
                        </SectionTitle>
                        <Segments>
                          <Segment $active>Basic</Segment>
                          <Segment>All Details</Segment>
                        </Segments>
                      </SectionHead>

                      <Tables>
                        <FieldTable fields={leftFields} />
                        <TableWrap>
                          <FieldTable fields={rightFields} />
                          <Mark $top={1} $left={-7} $right={100} $height={75} />
                          <Mark $top={220} $left={-3} $right={94} $height={70} />
                        </TableWrap>
                      </Tables>

                      <TabBar>
                        <Tab $state="active">Decoded Request</Tab>
                        <Tab>Original Request</Tab>
                        <Tab $state="off">Response (N/A)</Tab>
                      </TabBar>
                      <CodeWrap>
                        <Code>{decoded}</Code>
                        <Mark $top={13} $left={0} $width={624} $height={97} />
                      </CodeWrap>
                    </Detail>
                    <ScrollTrack />
                  </DetailBody>
                </DetailPane>
              </Panes>
            </Workspace>
          </Main>
        </Body>
      </Page>
    </Viewport>
  );
}
